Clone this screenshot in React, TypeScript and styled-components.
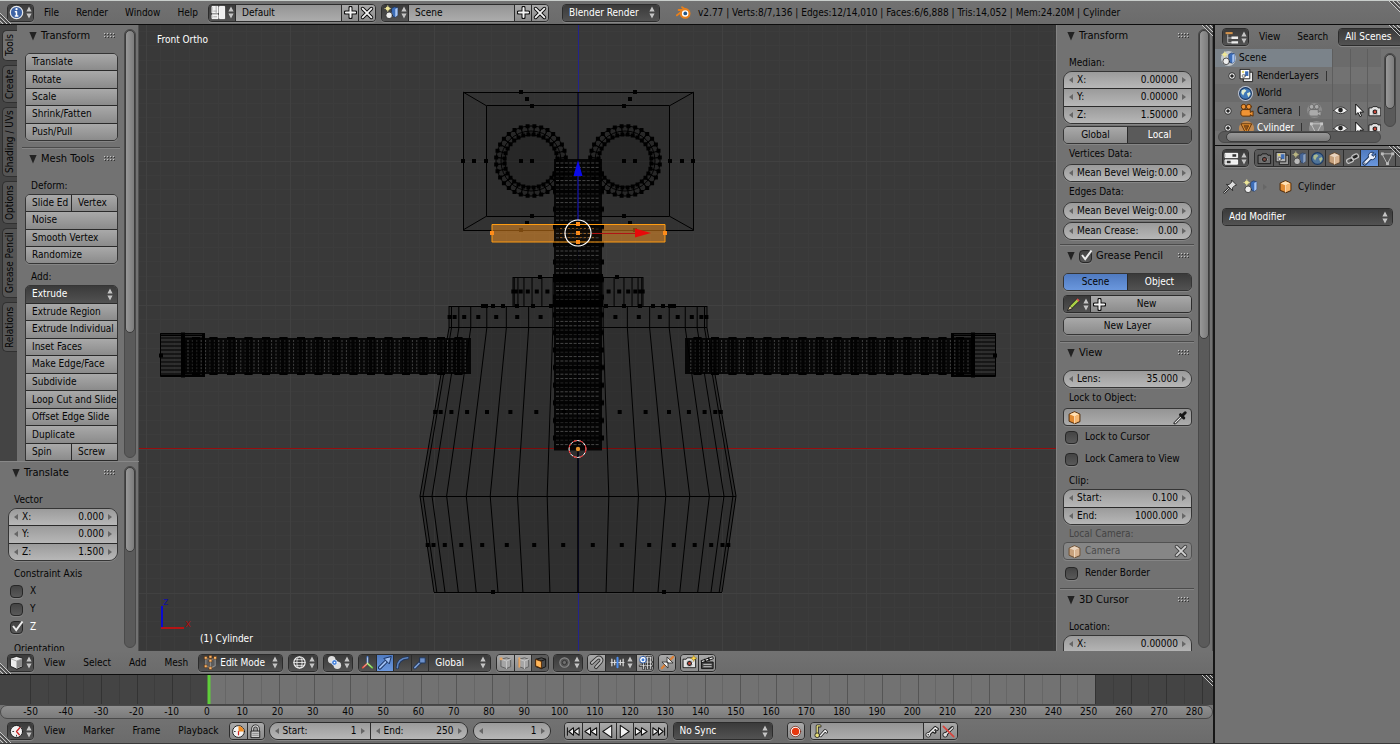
import React from "react";
import styled, { createGlobalStyle, css } from "styled-components";

const Global = createGlobalStyle`
  *, *::before, *::after { box-sizing: border-box; }
  body { margin: 0; background: #727272; }
  body, button, input, select {
    font-family: "DejaVu Sans Condensed", "DejaVu Sans", sans-serif;
    font-size: 10px;
    line-height: 14px;
    color: #050505;
  }
  button, input, select { margin: 0; padding: 0; border: 0; background: none; border-radius: 0; outline: 0; }
  svg { display: block; flex: none; }
`;

/* ---------- surfaces ---------- */
const lightFace = "linear-gradient(#a9a9a9, #8b8b8b)";
const darkFace = "linear-gradient(#3a3a3a, #525252)";
const numFace = "linear-gradient(#9b9b9b, #b7b7b7)";
const textFace = "linear-gradient(#949494, #acacac)";
const blueFace = "linear-gradient(#4f7ac0, #6a97dd)";

const Screen = styled.div`
  height: 100vh;
  min-height: 480px;
  display: flex;
  flex-direction: column;
  border-top: 1px solid #c9cecb;
  border-bottom: 1px solid #3a3a3a;
  overflow: hidden;
`;
const Bar = styled.header<{ $line?: boolean; $h?: number }>`
  position: relative;
  flex: none;
  height: ${(p) => p.$h ?? 24}px;
  display: flex;
  align-items: center;
  padding-left: 7px;
  background: linear-gradient(#727272, #6b6b6b);
  ${(p) => p.$line && css`border-bottom: 1px solid #0c0c0c;`}
`;
const Workspace = styled.div`
  flex: 1;
  min-height: 0;
  display: flex;
`;
const MainColumn = styled.main`
  flex: 1;
  min-width: 0;
  display: flex;
  flex-direction: column;
`;
const SideColumn = styled.aside`
  flex: none;
  width: 187px;
  display: flex;
  flex-direction: column;
  border-left: 2px solid #161616;
  background: #727272;
  overflow: hidden;
`;
const ViewRow = styled.div`
  flex: 1;
  min-height: 0;
  display: flex;
`;
const Menu = styled.nav<{ $gap?: number }>`
  display: flex;
  gap: ${(p) => p.$gap ?? 17}px;
  margin: 0 10px;
`;
const MenuItem = styled.button`
  white-space: nowrap;
`;

/* ---------- controls ---------- */
const Cluster = styled.div<{ $ml?: number }>`
  display: flex;
  flex: none;
  height: 18px;
  margin-left: ${(p) => p.$ml ?? 5}px;
  border: 1px solid #2c2c2c;
  border-radius: 4px;
  overflow: hidden;
  box-shadow: 0 1px 0 #858585;
  > * + * { border-left: 1px solid #2c2c2c; }
`;
type Tone = "light" | "dark" | "blue" | "dim";
const face = { light: lightFace, dark: darkFace, blue: blueFace, dim: "#5a5a5a" };
const IconButton = styled.button<{ $tone?: Tone; $w?: number }>`
  flex: none;
  width: ${(p) => p.$w ?? 17}px;
  display: flex;
  align-items: center;
  justify-content: center;
  gap: 2px;
  background: ${(p) => face[p.$tone ?? "light"]};
`;
const TextInput = styled.input<{ $w: number }>`
  width: ${(p) => p.$w}px;
  padding: 0 6px;
  background: ${textFace};
`;
const SelectBox = styled.label<{ $w?: number }>`
  position: relative;
  display: flex;
  align-items: center;
  width: ${(p) => (p.$w ? p.$w + "px" : "auto")};
  background: ${darkFace};
  padding: 0 4px;
  select {
    appearance: none;
    flex: 1;
    min-width: 0;
    height: 100%;
    padding-left: 2px;
    color: #fff;
  }
`;
const Title = styled.h2`
  margin: 0;
  flex: 1;
  font-size: 11px;
  font-weight: normal;
  line-height: 14px;
  white-space: nowrap;
`;
const PanelHead = styled.div`
  height: 22px;
  display: flex;
  align-items: center;
  gap: 4px;
  padding: 0 5px 0 7px;
`;
const PanelBox = styled.section<{ $pad?: number }>`
  border-bottom: 1px solid #4b4b4b;
  box-shadow: 0 1px 0 #858585;
  padding-bottom: ${(p) => p.$pad ?? 6}px;
`;
const Body = styled.div<{ $top?: number }>`
  padding: ${(p) => p.$top ?? 6}px 2px 0 3px;
`;
const Caption = styled.div<{ $top?: number; $bottom?: number; $off?: boolean }>`
  height: 14px;
  margin: ${(p) => p.$top ?? 3}px 0 ${(p) => p.$bottom ?? 3}px 6px;
  white-space: nowrap;
  color: ${(p) => (p.$off ? "#444" : "#050505")};
`;
const Stack = styled.div<{ $h: number; $round?: boolean; $top?: number }>`
  height: ${(p) => p.$h}px;
  margin-top: ${(p) => p.$top ?? 0}px;
  display: flex;
  flex-direction: column;
  border: 1px solid #353535;
  border-radius: ${(p) => (p.$round ? 9 : 5)}px;
  overflow: hidden;
  box-shadow: 0 1px 0 #858585;
  > * { flex: 1; min-height: 0; }
  > * + * { border-top: 1px solid #2a2a2a; }
`;
const Split = styled.div`
  display: flex;
  > * { flex: 1; min-width: 0; }
  > * + * { border-left: 1px solid #2a2a2a; }
`;
const ToolButton = styled.button<{ $tone?: Tone; $center?: boolean }>`
  display: flex;
  align-items: center;
  justify-content: ${(p) => (p.$center ? "center" : "flex-start")};
  padding-left: ${(p) => (p.$center ? 0 : 6)}px;
  text-align: left;
  white-space: nowrap;
  background: ${(p) => face[p.$tone ?? "light"]};
  color: ${(p) => (p.$tone === "dark" || p.$tone === "dim" ? "#fff" : "#050505")};
`;
const NumLabel = styled.label<{ $w?: number }>`
  display: flex;
  align-items: center;
  width: ${(p) => (p.$w ? p.$w + "px" : "auto")};
  padding: 0 5px;
  background: ${numFace};
  white-space: nowrap;
  > span { margin-left: 4px; }
  input { flex: 1; min-width: 0; width: 0; padding-right: 4px; text-align: right; }
`;
const CheckRow = styled.label<{ $top?: number; $on?: boolean }>`
  display: flex;
  align-items: center;
  gap: 7px;
  height: 18px;
  margin-top: ${(p) => p.$top ?? 0}px;
  padding-left: 2px;
  color: ${(p) => (p.$on ? "#fff" : "#050505")};
`;
const Box = styled.span`
  position: relative;
  flex: none;
  width: 13px;
  height: 13px;
  input {
    display: block;
    appearance: none;
    width: 13px;
    height: 13px;
    border: 1px solid #272727;
    border-radius: 4px;
    background: linear-gradient(#444, #595959);
    box-shadow: 0 1px 0 #858585;
  }
  svg { position: absolute; left: 1px; top: -1px; pointer-events: none; }
`;
const ObjectField = styled.label<{ $off?: boolean }>`
  display: flex;
  align-items: center;
  gap: 3px;
  height: 18px;
  padding: 0 3px;
  border: 1px solid ${(p) => (p.$off ? "#525252" : "#353535")};
  border-radius: 4px;
  background: ${(p) => (p.$off ? "#868686" : textFace)};
  box-shadow: 0 1px 0 #858585;
  input { flex: 1; min-width: 0; color: ${(p) => (p.$off ? "#4a4a4a" : "#050505")}; }
`;
const Pill = styled(Cluster)`
  border-radius: 9px;
`;
const PencilRow = styled(Cluster)`
  margin: 4px 0 0;
`;
const NewButton = styled.button`
  flex: 1;
  display: flex;
  align-items: center;
  padding-left: 2px;
  background: ${lightFace};
  > span { flex: 1; padding-right: 4px; text-align: center; }
`;
const KeyField = styled.label`
  display: flex;
  align-items: center;
  width: 112px;
  padding-left: 2px;
  background: ${textFace};
  input { flex: 1; min-width: 0; }
`;
const Stats = styled.div`
  display: flex;
  align-items: center;
  gap: 7px;
  margin-left: 16px;
  white-space: nowrap;
`;

/* ---------- scroll bars ---------- */
const Track = styled.div<{ $bottom?: number }>`
  flex: none;
  width: 12px;
  margin: 4px 0 ${(p) => p.$bottom ?? 3}px;
  border: 1px solid #4a4a4a;
  border-radius: 6px;
  background: #5a5a5a;
`;
const Thumb = styled.div<{ $part: number }>`
  height: ${(p) => p.$part}%;
  border: 1px solid #3c3c3c;
  border-radius: 6px;
  background: linear-gradient(90deg, #989898, #7c7c7c);
`;
const HTrack = styled.div`
  height: 12px;
  margin: 0 19px 0 3px;
  padding-left: 7px;
  border: 1px solid #4a4a4a;
  border-radius: 6px;
  background: #5a5a5a;
`;
const HThumb = styled.div`
  width: 68%;
  height: 10px;
  border: 1px solid #3c3c3c;
  border-radius: 5px;
  background: linear-gradient(#989898, #7c7c7c);
`;

/* ---------- tool shelf ---------- */
const Shelf = styled.div`
  flex: none;
  width: 139px;
  display: flex;
  flex-direction: column;
  background: #727272;
`;
const ShelfTop = styled.div`
  flex: 1;
  min-height: 0;
  display: flex;
  overflow: hidden;
  border-bottom: 1px solid #888;
`;
const ShelfBottom = styled.div`
  flex: none;
  height: 189px;
  display: flex;
  overflow: hidden;
`;
const Tabs = styled.div`
  flex: none;
  width: 17px;
  display: flex;
  flex-direction: column;
  gap: 4px;
  padding: 5px 0 0 2px;
  background: #444;
`;
const Tab = styled.button<{ $on?: boolean; $h: number }>`
  flex: none;
  height: ${(p) => p.$h}px;
  writing-mode: vertical-rl;
  transform: rotate(180deg);
  text-align: center;
  white-space: nowrap;
  border: 1px solid #303030;
  border-left: 0;
  border-radius: 0 5px 5px 0;
  background: ${(p) => (p.$on ? "#727272" : "#555")};
`;
const ShelfBody = styled.div`
  flex: 1;
  min-width: 0;
  overflow: hidden;
  margin: 0 4px 0 5px;
`;
const ShelfEdge = styled.div`
  flex: none;
  width: 3px;
  border-right: 1px solid #505050;
`;
const Props = styled.div`
  position: relative;
  flex: none;
  width: 157px;
  display: flex;
  overflow: hidden;
  background: #727272;
  border-left: 1px solid #848484;
`;
const PropsBody = styled.div`
  flex: 1;
  min-width: 0;
  overflow: hidden;
  margin: 0 4px 0 3px;
`;
const View3D = styled.div`
  flex: 1;
  min-width: 0;
  background: #393939;
  svg { width: 100%; height: 100%; }
`;

/* ---------- timeline ---------- */
const TimeTrack = styled.div`
  position: relative;
  flex: none;
  height: 31px;
  border-top: 1px solid #0c0c0c;
  border-bottom: 1px solid #444;
  svg.ticks { width: 100%; height: 100%; }
`;
const TimeScale = styled.div`
  flex: none;
  height: 14px;
  padding-left: 12px;
  display: grid;
  grid-template-columns: repeat(34, minmax(0, 1fr));
  text-align: center;
  border: 1px solid #4a4a4a;
  border-radius: 7px;
  background: linear-gradient(#909090, #7a7a7a);
  line-height: 12px;
`;
const CornerSpot = styled.div<{ $right?: boolean; $bottom?: boolean }>`
  position: absolute;
  ${(p) => (p.$right ? "right: 0;" : "left: 0;")}
  ${(p) => (p.$bottom ? "bottom: 0;" : "top: 0;")}
`;

/* ---------- outliner / properties ---------- */
const Outliner = styled.div`
  flex: none;
  height: 97px;
  display: flex;
  flex-direction: column;
  border-bottom: 1px solid #0c0c0c;
`;
const OutTop = styled.div`
  height: 82px;
  display: flex;
  padding-right: 4px;
  overflow: hidden;
`;
const Tree = styled.ul`
  flex: 1;
  min-width: 0;
  margin: 0 3px 0 0;
  padding: 0;
  list-style: none;
  overflow: hidden;
`;
const Node = styled.li<{ $depth: number; $picked?: boolean; $on?: boolean }>`
  display: grid;
  grid-template-columns: 117px 18px 17px 1fr;
  height: 17px;
  color: ${(p) => (p.$on ? "#fff" : "#050505")};
  &:nth-child(odd) { height: 18px; background: #6b6b6b; }
  > div { display: flex; align-items: center; border-left: 1px solid #5e5e5e; }
  > div:first-child {
    border-left: 0;
    gap: 3px;
    padding-left: ${(p) => p.$depth}px;
    ${(p) => p.$picked && "background: #7b838a;"}
  }
`;
const Mark = styled.i`
  width: 1px;
  height: 10px;
  margin: 0 4px;
  background: #333;
`;
const Gap = styled.i`
  width: 1px;
`;
const Halo = styled.span`
  display: flex;
  border-radius: 8px;
  background: #8c8c8c;
`;
const Context = styled.div`
  height: 33px;
  display: flex;
  align-items: center;
  gap: 5px;
  padding-left: 8px;
`;
const ModifierRow = styled.div`
  display: flex;
  margin: 5px 7px 0;
  height: 18px;
  border: 1px solid #2c2c2c;
  border-radius: 4px;
  overflow: hidden;
  > label { flex: 1; }
`;

/* ---------- icons ---------- */
type Kids = { children?: React.ReactNode; s?: number };
const I = ({ children, s = 15 }: Kids) => (
  <svg width={s} height={s} viewBox="0 0 16 16" fill="none" strokeLinecap="round" strokeLinejoin="round" aria-hidden="true">
    {children}
  </svg>
);
const UpDown = () => (
  <svg width="6" height="13" viewBox="0 0 6 13" aria-hidden="true">
    <path d="M3 0.5 5.6 5.4H.4zM3 12.5 5.6 7.6H.4z" fill="#c4c4c4" />
  </svg>
);
const ArrowL = () => <svg width="4" height="6" viewBox="0 0 4 6" aria-hidden="true"><path d="M4 0v6L0 3z" fill="#666" /></svg>;
const ArrowR = () => <svg width="4" height="6" viewBox="0 0 4 6" aria-hidden="true"><path d="M0 0v6l4-3z" fill="#666" /></svg>;
const Tri = () => <svg width="8" height="9" viewBox="0 0 8 9" aria-hidden="true"><path d="M.4 0h7.2L4 8.5z" fill="#222" /></svg>;
const Grip = () => (
  <svg width="11" height="6" viewBox="0 0 11 6" aria-hidden="true">
    {[0, 3, 6, 9].map((x) => [0, 3].map((y) => (
      <g key={x + "-" + y}><path d={`M${x} ${y}h1v1h-1z`} fill="#c6c6c6" /><path d={`M${x + 1} ${y + 1}h1v1h-1z`} fill="#333" /></g>
    )))}
  </svg>
);
const Corner = ({ flip }: { flip?: boolean }) => (
  <svg width="11" height="11" viewBox="0 0 11 11" aria-hidden="true">
    <g transform={flip ? "" : "translate(11 11) rotate(180)"}>
      <path d="M0 0 11 11M4 0 11 7M8 0 11 3" stroke="#c8c8c8" />
      <path d="M1.5 0 11 9.5M5.5 0 11 5.5" stroke="#2a2a2a" />
    </g>
  </svg>
);
const Info = () => (
  <I><circle cx="8" cy="8" r="6.6" fill="#3d63a5" stroke="#e8e8e8" strokeWidth="1.3" /><path d="M8 7.3v4M6.8 11.6h2.6M6.8 7.3H8" stroke="#fff" strokeWidth="1.6" /><circle cx="8" cy="4.5" r="1.2" fill="#fff" /></I>
);
const LayoutIcon = () => (
  <I><path d="M1.5 1.5h6v7h-6zM1.5 10.5h6v4h-6zM9.500 1.5h5v13h-5z" fill="#eee" stroke="#fff" /><path d="M5.500 1.500v7M3 6.500h3M3 12.500h3" stroke="#aaa" /></I>
);
const SceneArt = () => (
  <><path d="M8.500 3.500 11 2l3.500 1v8L12 13l-3.500-1z" fill="#3c6db8" stroke="#1d3563" strokeWidth=".7" /><path d="M12 4.300 14.500 3v8L12 13z" fill="#a9c6f2" /><circle cx="4" cy="3.800" r="2.200" fill="#e8e08a" /><path d="M4 .6v6.400M.8 3.800h6.400" stroke="#efe9a6" strokeWidth=".7" /><circle cx="5.500" cy="11" r="3.500" fill="#eee" stroke="#222" strokeWidth=".8" /></>
);
const SceneIcon = ({ dim, lit }: { dim?: boolean; lit?: boolean }) => (
  <I>{lit && <circle cx="8" cy="8" r="8" fill="#c3c8cc" />}<g opacity={dim ? 0.65 : 1}><SceneArt /></g></I>
);
const Plus = () => <I s={13}><path d="M8 2v12M2 8h12" stroke="#111" strokeWidth="5" /><path d="M8 2.400v11.200M2.400 8h11.200" stroke="#f2f2f2" strokeWidth="2.500" /></I>;
const Cross = ({ off }: { off?: boolean }) => <I s={14}><path d="m3 3 10 10M13 3 3 13" stroke={off ? "#444" : "#111"} strokeWidth="4.200" /><path d="m3 3 10 10M13 3 3 13" stroke={off ? "#d2d2d2" : "#f2f2f2"} strokeWidth="2.100" /></I>;
const Logo = () => (
  <I><path d="M1 11 8.500 5.300H2.800M6.500 2.300l5 3.700" stroke="#e8801c" strokeWidth="2" /><circle cx="9.800" cy="9" r="4.600" fill="#fff" stroke="#e8801c" strokeWidth="2.200" /><circle cx="9.900" cy="9" r="2" fill="#265787" /></I>
);
const CubeW = () => (
  <I><path d="M8 15 1.500 12V3.500L8 1.500l6.500 2V12z" fill="#ececec" stroke="#111" strokeWidth=".9" /><path d="M8 6.500V14.500L14 11.600V4.200z" fill="#8a8a8a" /><path d="M2.400 4.200 8 6.400l5.600-2.200" stroke="#999" strokeWidth=".8" /></I>
);
const CubeO = ({ dim }: { dim?: boolean }) => (
  <I><path d="M8 14.500 2.200 12V4.400L8 1.800l5.800 2.600V12z" fill={dim ? "#c7a17c" : "#e08a32"} stroke={dim ? "#6a4c30" : "#4b2807"} strokeWidth="1" /><path d="M2.800 4.600 8 2.400l5.200 2.200L8 7z" fill={dim ? "#e8d3be" : "#ffe0b4"} /><path d="M8 7v7l5-2.400V4.800z" fill={dim ? "#d8b492" : "#f6b872"} /><path d="M8 7v7" stroke="#fff2dd" strokeWidth=".7" /></I>
);
const EditIcon = () => (
  <I><path d="M3 3.500 8 5l5-1.500v8L8 14l-5-2.500zM8 5v9" stroke="#8d8d8d" strokeWidth="1.200" fill="#5c5c5c" />{[[3, 3], [8, 2], [13, 3], [3, 12], [8, 14], [8, 6]].map(([x, y]) => <rect key={x + "," + y} x={x - 1.4} y={y - 1.4} width="2.800" height="2.800" fill="#ffb566" stroke="#5b2f08" strokeWidth=".5" />)}</I>
);
const Globe = () => <I><circle cx="8" cy="8" r="6" stroke="#e8e8e8" strokeWidth="1.300" /><ellipse cx="8" cy="8" rx="2.800" ry="6" stroke="#e8e8e8" /><path d="M2 8h12M3 5h10M3 11h10" stroke="#e8e8e8" strokeWidth=".9" /></I>;
const Pivot = () => <I><circle cx="5" cy="5" r="4" fill="#ddd" /><circle cx="11" cy="11" r="4" fill="#ddd" /><circle cx="8" cy="8" r="3" fill="#3d7bd8" stroke="#fff" strokeWidth=".8" /><circle cx="8" cy="8" r=".9" fill="#fff" /></I>;
const Axes = () => <I><path d="M8 9V2" stroke="#4d84e0" strokeWidth="2" /><path d="m8 9-5 4.500" stroke="#e84a3a" strokeWidth="2" /><path d="m8 9 5 4.500" stroke="#6fce3f" strokeWidth="2" /><path d="M8 3v6l4 3.500M8 9l-4 3.500" stroke="#e8e8e8" strokeWidth=".7" /></I>;
const MoveIcon = () => <I><path d="m2 13.500 6-6" stroke="#16305f" strokeWidth="4" /><path d="m2 13.500 6-6" stroke="#9dbdf0" strokeWidth="2" /><path d="M14 2 12 9.500 6.500 4z" fill="#9dbdf0" stroke="#16305f" /></I>;
const RotIcon = () => <I><path d="M2.500 13.500C2.500 7 7 3.500 13.500 3" stroke="#20365c" strokeWidth="3.400" /><path d="M2.500 13.500C2.500 7 7 3.500 13.500 3" stroke="#5f85c0" strokeWidth="1.700" /></I>;
const ScaleIcon = () => <I><path d="m2 13.500 6-6" stroke="#20365c" strokeWidth="3.600" /><path d="m2 13.500 6-6" stroke="#7d9fd4" strokeWidth="1.700" /><path d="M7.500 3H13v5.500H7.500z" fill="#6c90cb" stroke="#20365c" /></I>;
const ModeCube = ({ kind }: { kind: "v" | "e" | "f" }) => (
  <I>
    <path d="M3.500 4.500 9 3l4.500 1.500v8L9 14.500l-5.500-2z" fill={kind === "f" ? "#4b4b4b" : "#a5a5a5"} stroke={kind === "f" ? "#111" : "#5e5e5e"} />
    <path d="M9 6.500v8M3.500 4.500 9 6.500l4.500-2" stroke={kind === "f" ? "#111" : "#c9c9c9"} />
    {kind === "v" && <circle cx="3.300" cy="4" r="1.700" fill="#e5a565" />}
    {kind === "e" && <path d="M3.500 3.500v9" stroke="#e5a565" strokeWidth="2" />}
    {kind === "f" && <path d="M3.200 4.800 9 6.800v7.400l-5.800-2.400z" fill="#ffb65a" stroke="#5b2f08" />}
  </I>
);
const PropEdit = () => <I><circle cx="8" cy="8" r="5" fill="#555" stroke="#8a8a8a" strokeWidth="1.200" /><circle cx="8" cy="8" r="2.300" fill="#6e6e6e" stroke="#333" /></I>;
const Magnet = () => <I><path d="m3 8.500 5.500-5c3-2.200 6.300 1.200 4 4L7.500 13" stroke="#333" strokeWidth="4" /><path d="m3 8.500 5.500-5c3-2.200 6.300 1.200 4 4L7.500 13" stroke="#b9b9b9" strokeWidth="2" /></I>;
const SnapInc = () => <I><path d="M1 8h14" stroke="#ddd" /><path d="M2 4.500v7M5 5.500v5M11 5.500v5M14 4.500v7" stroke="#ddd" strokeWidth="1.300" /><path d="M8 3v10" stroke="#4d8ff0" strokeWidth="2.200" /></I>;
const SnapGrid = () => <I><path d="M5 3h9M3 7.500h12M2 11.500h13M6 2v13M10 2v13M13.500 2v13" stroke="#111" strokeWidth="2.400" /><path d="M5 3h9M3 7.500h12M2 11.500h13M6 2v13M10 2v13M13.500 2v13" stroke="#e6e6e6" /><circle cx="5.300" cy="5" r="3.600" fill="#fff" stroke="#2b5aa8" /><circle cx="5.300" cy="5" r="1.600" fill="#3d7bd8" /></I>;
const Merge = () => <I><path d="M2 14l4.500-4.500M14 2 9.500 6.500" stroke="#d9813a" strokeWidth="2.400" /><path d="M2.500 7.500h6v6zM13.500 8.500h-6v-6z" fill="#eee" stroke="#222" strokeWidth=".8" /></I>;
const Camera = ({ star, dim, s }: { star?: boolean; dim?: boolean; s?: number }) => (
  <I s={s}><path d="M1.500 4.500h3l1-1.500h5l1 1.500h3v9h-13z" fill={dim ? "#6d6d6d" : "#e2e2e2"} stroke="#111" strokeWidth=".9" /><circle cx="8" cy="9" r="3.300" fill="#222" stroke={dim ? "#999" : "#fff"} strokeWidth=".8" /><circle cx="8" cy="9" r="1.500" fill={dim ? "#854c43" : "#c9483a"} />{star && <path d="m12.500 0 1 2.500 2.500 1-2.500 1-1 2.500-1-2.500-2.500-1 2.500-1z" fill="#ffd94a" stroke="#7b5a00" strokeWidth=".4" />}</I>
);
const Clap = () => <I><path d="M2 7.500h12v7H2z" fill="#444" stroke="#111" /><path d="m1.500 6 12-4.200.7 2.200L2.300 8z" fill="#eee" stroke="#111" /><path d="m5 4.800 1 2M9 3.400l1 2" stroke="#111" strokeWidth="1.500" /><path d="M4 10h8M4 12.500h8" stroke="#ccc" /></I>;
const Clock = () => <I><circle cx="8" cy="8" r="6.500" fill="#f2f2f2" stroke="#1a1a1a" /><path d="M8 8 11.500 4M8 8l3 3.500" stroke="#c22" strokeWidth="1.400" /><path d="M4 8h1M8 13v-1" stroke="#333" /></I>;
const ClockPie = () => <I><circle cx="8" cy="8" r="6.300" fill="#f4f4f4" stroke="#1a1a1a" /><path d="M8 8V2.200A5.800 5.800 0 0 1 13.800 8z" fill="#f08a1d" /><path d="M8 8v3.500" stroke="#c22" strokeWidth="1.300" /><path d="M3.500 8h1" stroke="#333" /></I>;
const Lock = () => <I><path d="M5 8V5a3 3 0 0 1 6 0v3" stroke="#222" strokeWidth="3" /><path d="M5 8V5a3 3 0 0 1 6 0v3" stroke="#ddd" strokeWidth="1.200" /><path d="M3.500 7.500h9v7h-9z" fill="#cfcfcf" stroke="#222" /><path d="M5 10h6M5 12h6" stroke="#888" /></I>;
const Play = ({ d }: { d: string }) => <I><path d={d} fill="#f2f2f2" stroke="#111" strokeWidth="1.100" /></I>;
const Rec = () => <I><circle cx="8" cy="8" r="4.600" fill="#e6380f" stroke="#fff" strokeWidth="1.200" /><circle cx="8" cy="8" r="5.500" stroke="#7a1a08" strokeWidth=".7" /></I>;
const Key = () => <I><path d="M5 11 12 4m0 0 2 1.500M9.500 6.500l2 2" stroke="#222" strokeWidth="3.600" /><circle cx="4.500" cy="11.500" r="2.500" fill="#f0f0f0" stroke="#222" strokeWidth=".9" /><path d="M5.500 10.500 12 4l1.800 1.500M9.500 6.500l1.600 1.600" stroke="#f0f0f0" strokeWidth="1.600" /><circle cx="4.500" cy="11.500" r=".8" fill="#222" /></I>;
const KeySet = () => <I><path d="M4.500 10V2h3" stroke="#222" strokeWidth="3.200" /><path d="M4.500 10V2h3" stroke="#e8df7a" strokeWidth="1.500" /><circle cx="4.500" cy="12" r="2.500" fill="#e8df7a" stroke="#222" strokeWidth=".9" /><path d="m8 12.500 5-5.500 1.500 1.500" stroke="#222" strokeWidth="3.200" /><path d="m8 12.500 5-5.500 1.500 1.500" stroke="#f0f0f0" strokeWidth="1.500" /></I>;
const KeyOff = () => <I><path d="M5 11 12 4" stroke="#222" strokeWidth="3.600" /><circle cx="4.500" cy="11.500" r="2.500" fill="#ddd" stroke="#222" /><path d="M5.500 10.500 12.500 4" stroke="#ddd" strokeWidth="1.600" /><path d="m2.500 2.500 11 11" stroke="#d8433c" strokeWidth="1.900" /></I>;
const TreeIcon = () => <I><path d="M4 4v9.500h5M4 8.500h5" stroke="#bbb" /><path d="M1.500 2h8v2.500h-8z" fill="#e8a050" stroke="#333" strokeWidth=".5" /><path d="M8 7h7v2.500H8zM8 12h7v2.500H8z" fill="#eee" /></I>;
const PropsIcon = () => <I><path d="M1.500 2.500h13v4.500h-13zM1.500 9.500h13v4.500h-13z" fill="#eee" stroke="#fff" /><path d="M9 3.500h4v2.500H9zM3 10.500h4v2.500H3z" fill="#333" /></I>;
const Layers = ({ dim }: { dim?: boolean }) => <I><path d="M5 4.500h9.500v10H5z" fill={dim ? "#999" : "#eee"} stroke="#222" /><path d="M1.500 1.500h10v10h-10z" fill={dim ? "#b5b5b5" : "#fff"} stroke="#222" /><path d="M6.500 3.500h3.500v5H6.500z" fill="#3c6db8" /><circle cx="5" cy="8.500" r="1.700" fill="#ddd" stroke="#333" strokeWidth=".6" /><circle cx="4.300" cy="4.200" r="1.200" fill="#e2d667" /></I>;
const World = ({ dim }: { dim?: boolean }) => <I>{!dim && <circle cx="8" cy="8" r="8" fill="#bcc4d4" />}<circle cx="8" cy="8" r="6.300" fill={dim ? "#4e7399" : "#3f79b8"} stroke="#1d3a63" strokeWidth="1.200" /><path d="M4 4.500 7 3.500l2 1.500-2 2-1.500 3-2-2.500zM9.500 8l3-1.500 1 2-2.500 3.500z" fill={dim ? "#aab98e" : "#e3efd0"} /></I>;
const Link = () => <I><path d="m7 10 5-5" stroke="#222" strokeWidth="3" /><rect x="1.500" y="8" width="7.500" height="4.600" rx="2.300" transform="rotate(-25 5 10)" stroke="#c4c4c4" strokeWidth="1.300" /><rect x="7" y="3.600" width="7.500" height="4.600" rx="2.300" transform="rotate(-25 11 6)" stroke="#c4c4c4" strokeWidth="1.300" /></I>;
const Wrench = () => <I><path d="M2.800 13.200 9 7" stroke="#173058" strokeWidth="4.600" /><path d="M14.300 3.500 11.800 5.700 10.300 4.200 12.500 1.700A4 4 0 1 0 14.300 3.500z" fill="#e8eefa" stroke="#173058" /><path d="M2.800 13.200 9 7" stroke="#e8eefa" strokeWidth="2.500" /><circle cx="3" cy="13" r=".7" fill="#173058" /></I>;
const MeshTri = ({ tone = "#bdbdbd" }: { tone?: string }) => <I><path d="M2.500 3h11L8 13.500z" stroke={tone} strokeWidth="1" />{[[2.5, 3], [13.5, 3], [8, 13.5]].map(([x, y]) => <rect key={x} x={x - 1.5} y={y - 1.5} width="3" height="3" fill={tone} />)}</I>;
const MeshObj = () => <I><circle cx="8" cy="8" r="8" fill="#c08a52" /><path d="M2.500 3h11L8 14z" fill="#f39a35" stroke="#5a2e05" strokeWidth="1" /><path d="M5.600 5h4.800L8 9.800z" fill="#8c5420" stroke="#5a2e05" strokeWidth=".8" /></I>;
const CamObj = ({ tone = "#ef9334", line = "#5a2e05" }: { tone?: string; line?: string }) => <I><circle cx="5" cy="4" r="2.600" fill={tone} stroke={line} /><circle cx="10.500" cy="4" r="2.600" fill={tone} stroke={line} /><path d="M4 7h8v3l3-1.500v5.500L12 12.500v1.500H4l-2-1.500v-3z" fill={tone} stroke={line} /></I>;
const Expand = () => <svg width="8" height="8" viewBox="0 0 8 8" aria-hidden="true"><circle cx="4" cy="4" r="3.300" fill="#eee" stroke="#222" strokeWidth=".9" /><path d="M2.300 4h3.400M4 2.300v3.400" stroke="#111" strokeWidth="1.300" /></svg>;
const Eye = () => <I><path d="M1 8c3.500-5 10.500-5 14 0-3.500 4.500-10.500 4.500-14 0z" fill="#f0f0f0" stroke="#222" strokeWidth=".9" /><circle cx="8" cy="7.500" r="2.500" fill="#222" /></I>;
const Cursor = () => <I><path d="M5 1.500v11l2.600-2.300L9.500 14.500l1.800-.8-1.800-4h3.500z" fill="#fff" stroke="#111" /></I>;
const Pin = () => <I><path d="m9.500 1.500 5 5-2 .5-2.500 2.500.3 3-6.800-6.800 3 .3L9 3.500z" fill="#ddd" stroke="#222" strokeWidth=".9" /><path d="m6 10-4.500 4.500" stroke="#222" strokeWidth="2.200" /><path d="m6 10-4.500 4.500" stroke="#ddd" strokeWidth="1" /></I>;
const Pencil = () => <I><path d="M2 14 4 9.500 11.500 2l2.500 2.500L6.500 12z" fill="#a8cf45" stroke="#222" /><path d="m11 2.500 2.500 2.500 1-1.500-2-2z" fill="#e05050" /><path d="M2 14l2-4.500L6.500 12z" fill="#f2dca8" stroke="#222" strokeWidth=".6" /></I>;
const Dropper = () => <I><path d="M2 14 9 7" stroke="#222" strokeWidth="3" /><path d="M2.300 13.700 9 7" stroke="#eee" strokeWidth="1.300" /><path d="m8 5 3.500 3.500M9.800 6.200 13 3" stroke="#151515" strokeWidth="3.200" /></I>;
const CheckMark = () => <svg width="13" height="12" viewBox="0 0 13 12" aria-hidden="true"><path d="m2 6 3.200 4L11.500 1.500" fill="none" stroke="#eee" strokeWidth="2" /></svg>;

/* ---------- composite controls ---------- */
const EditorType = ({ icon, name }: { icon: React.ReactNode; name: string }) => (
  <Cluster $ml={0}><IconButton $tone="dark" $w={25} aria-label={name}>{icon}<UpDown /></IconButton></Cluster>
);
const Choice = ({ value, w, icon, name }: { value: string; w?: number; icon?: React.ReactNode; name: string }) => (
  <SelectBox $w={w}>{icon}<select aria-label={name}><option>{value}</option></select><UpDown /></SelectBox>
);
const Num = ({ label, value, w }: { label?: string; value: string; w?: number }) => (
  <NumLabel $w={w}><ArrowL /><span>{label}</span><input defaultValue={value} aria-label={label ?? "Current frame"} /><ArrowR /></NumLabel>
);
const Check = ({ on, name }: { on?: boolean; name?: string }) => (
  <Box><input type="checkbox" defaultChecked={on} aria-label={name} />{on && <CheckMark />}</Box>
);
const Panel = ({ title, check, pad, children }: { title: string; check?: boolean; pad?: number; children: React.ReactNode }) => (
  <PanelBox $pad={pad}>
    <PanelHead><Tri />{check && <Check on name={title} />}<Title>{title}</Title><Grip /></PanelHead>
    {children}
  </PanelBox>
);
const Tools = ({ items }: { items: string[] }) => <>{items.map((t) => <ToolButton key={t}>{t}</ToolButton>)}</>;

/* ---------- 3D view drawing ---------- */
const CX = 578;
const ring = Array.from({ length: 17 }, (_, k) => Math.sin(((k - 8) * Math.PI) / 16));
const ringMid = Array.from({ length: 16 }, (_, k) => Math.sin(((k - 7.5) * Math.PI) / 16));
const range = (n: number) => Array.from({ length: n }, (_, i) => i);
const dots = (pts: number[][], size = 4) => pts.map(([x, y]) => `M${(x - size / 2).toFixed(1)} ${(y - size / 2).toFixed(1)}h${size}v${size}h-${size}z`).join("");
const bandLines = (y1: number, w1: number, y2: number, w2: number) => ring.map((r) => `M${CX + r * w1} ${y1}L${CX + r * w2} ${y2}`).join("");
const bandDots = (y: number, w: number) => dots(ringMid.map((r) => [CX + r * w, y]));

const EyeRing = ({ x }: { x: number }) => {
  const y = 161;
  const at = (r: number, a: number) => [x + r * Math.cos(a), y + r * Math.sin(a)];
  const angles = range(32).map((i) => ((i + 0.5) * Math.PI) / 16);
  return (
    <g>
      <circle cx={x} cy={y} r="36" fill="#000" fillOpacity=".14" />
      {[26, 30, 35].map((r) => <circle key={r} cx={x} cy={y} r={r} fill="none" stroke="#000" strokeWidth="1" />)}
      <path d={angles.map((a) => `M${at(26, a).join(" ")}L${at(36, a).join(" ")}`).join("")} stroke="#000" strokeWidth="1.200" />
      <path d={dots([...angles.map((a) => at(35, a)), ...angles.map((a) => at(26.5, a))], 4)} fill="#000" />
    </g>
  );
};

const Arm = () => (
  <g>
    <path d="M160.500 333.500h44v43h-44z" fill="#000" fillOpacity=".2" stroke="#000" />
    <path d={range(11).map((i) => `M160 ${334 + i * 4}h45`).join("") + "M160 335.500h45M160 375.500h45"} stroke="#000" strokeWidth="1" />
    <path d="M181 332.500h4v45h-4zM159 353.500h4v4h-4z" fill="#000" />
    <path d="M184 338h287v36H184z" fill="#000" fillOpacity=".88" />
    <path d="M202 333h3v44h-3z" fill="#000" />
    <path d={range(64).map((i) => `M${188 + i * 4.4} 340v32`).join("")} stroke="#434343" strokeWidth="1" strokeDasharray="2 1.400" />
    <path d={range(16).map((i) => `M${192 + i * 17.5} 337h8v38h-8z`).join("")} fill="#000" fillOpacity=".45" />
    <path d={range(16).map((i) => `M${192 + i * 17.5} 337h8v2h-8zM${192 + i * 17.5} 373h8v2h-8z`).join("")} fill="#000" />
  </g>
);

const Wireframe = () => (
  <svg viewBox="139 25 917 626" preserveAspectRatio="xMidYMid slice" fill="none" role="img" aria-label="3D view">
    <g shapeRendering="crispEdges">
      <path d={range(66).map((i) => `M${CX + (i - 32) * 14.4} 0v744`).join("") + range(46).map((i) => `M100 ${449 + (i - 31) * 14.4}h1000`).join("")} stroke="#3c3c3c" />
      <path d={range(7).map((i) => `M${CX + (i - 3) * 144} 0v744`).join("") + range(4).map((i) => `M100 ${161 + i * 144}h1000`).join("")} stroke="#414141" />
      <path d="M100 448.500h1000" stroke="#960d0d" />
      <path d="M578 0v744" stroke="#23238c" />
    </g>
    {/* torso */}
    <path d={`M449 306H707V328L736 496 722 592H434L420 496 449 328zM513 277H643V306H513z`} fill="#000" fillOpacity=".17" />
    <path d={bandLines(306, 129, 328, 129) + bandLines(328, 129, 496, 158) + bandLines(496, 158, 592, 144) + bandLines(277, 65, 306, 65)} stroke="#000" />
    <path d="M449 306.500H707M449 327.500H707M420 496.500H736M434 592.500H722M513 277.500H643" stroke="#000" />
    <path d={bandDots(317, 129) + bandDots(412, 143.5) + bandDots(545, 151) + bandDots(291.5, 65)} fill="#000" />
    <path d={dots([[483, 306], [486, 306], [493, 306], [503, 306], [517, 306], [533, 306], [551, 306], [606, 306], [624, 306], [640, 306], [653, 306], [663, 306], [670, 306], [674, 306], [540, 277], [617, 277], [493, 592], [664, 592]])} fill="#000" />
    {/* head */}
    <path d="M463.500 92.500h230v138h-230z" fill="#000" fillOpacity=".12" stroke="#000" />
    <path d="M486.500 105.500h183v111h-183z" fill="#000" fillOpacity=".08" stroke="#000" />
    <path d="m463 92 23 13.500M694 92l-24 13.500M463 230l23-13.500M694 230l-24-13.500M578 92v70" stroke="#000" />
    <path d={dots([521, 635].flatMap((x) => [[x, 92], [x, 230]]).concat([527, 630].flatMap((x) => [[x, 99], [x, 223]]), [532, 624].flatMap((x) => [[x, 106], [x, 216]]), [463, 474, 486, 521, 532, 624, 635, 670, 682, 693].map((x) => [x, 161])))} fill="#000" />
    <EyeRing x={531} />
    <EyeRing x={625} />
    {/* arms */}
    <Arm />
    <g transform="translate(1156 0) scale(-1 1)"><Arm /></g>
    {/* selected slab */}
    <path d="M492 224.500h173v17.500H492z" fill="#ff9620" fillOpacity=".48" />
    {/* spine */}
    <path d="M554 159h48v291.500h-48z" fill="#000" fillOpacity=".88" />
    <path d={range(65).map((i) => `M556 ${163 + i * 4.4}h44`).join("")} stroke="#474747" strokeWidth="1" strokeDasharray="3 1.400" />
    <path d={range(16).map((i) => `M553 ${171 + i * 17.6}h51v6h-51z`).join("")} fill="#000" fillOpacity=".5" />
    <path d={range(16).map((i) => `M553 ${172 + i * 17.6}h3v4h-3zM601 ${172 + i * 17.6}h3v4h-3z`).join("") + "M553 274h50v8h-50zM553 300h50v6h-50z"} fill="#000" />
    <path d="M492 224.500h173v17.500H492z" stroke="#ff9c12" />
    <path d={dots([[492, 233], [665, 233], [578, 224], [578, 242], [578, 233]])} fill="#ff8c1a" />
    <path d="M560 233.500h36M560 228.500h36M560 237.500h36" stroke="#c9781c" strokeOpacity=".6" strokeDasharray="2 2" />
    {/* transform widget */}
    <path d="M578 220v-50" stroke="#1a1ad0" />
    <path d="M578 160l4.500 16h-9z" fill="#0b0bea" />
    <path d="M592 233.500h44" stroke="#b01414" />
    <path d="M651 233l-16-4.500v9z" fill="#e80a0a" />
    <circle cx="578" cy="233" r="13" stroke="#fff" strokeWidth="1.200" />
    {/* 3D cursor */}
    <path d="M578 451V592" stroke="#000" />
    <circle cx="577.500" cy="449" r="8.500" stroke="#fff" />
    <circle cx="577.500" cy="449" r="8.500" stroke="#e01010" strokeDasharray="4 3" />
    <circle cx="578" cy="449" r="2.200" fill="#e8952e" />
    {/* mini axes */}
    <path d="M162 628v-22" stroke="#0b0bd0" strokeWidth="2" />
    <path d="M161 628h23" stroke="#e00808" strokeWidth="1.500" />
    <g fontSize="10" fontFamily='"DejaVu Sans", sans-serif'>
      <text x="163" y="605" fill="#1010a0">z</text>
      <text x="185" y="627" fill="#a01010">x</text>
    </g>
    <g fontSize="10" fill="#fff">
      <text x="157" y="43">Front Ortho</text>
      <text x="200" y="642">(1) Cylinder</text>
    </g>
  </svg>
);

/* ---------- timeline drawing ---------- */
const Ticks = () => (
  <svg className="ticks" viewBox="0 0 1213 29" preserveAspectRatio="none" aria-hidden="true">
    <path d="M0 0h1213v29H0z" fill="#444" />
    <path d="M208 0h887v29H208z" fill="#727272" />
    <path d={range(34).map((i) => `M${Math.round(207.7 + (i - 4.5) * 35.5) + 0.5} 0v29`).join("")} stroke="#000" strokeOpacity=".1" />
    <path d={range(34).map((i) => `M${Math.round(207.7 + (i - 5) * 35.5) + 0.5} 0v29`).join("")} stroke="#000" strokeOpacity=".25" />
    <path d="M207.500 0h3v29h-3z" fill="#5fce3a" />
  </svg>
);

const frames = range(34).map((i) => (i - 5) * 10);

export default function App() {
  return (
    <>
      <Global />
      <Screen>
        <Bar $line>
          <CornerSpot $bottom><Corner /></CornerSpot>
          <EditorType icon={<Info />} name="Info editor" />
          <Menu><MenuItem>File</MenuItem><MenuItem>Render</MenuItem><MenuItem>Window</MenuItem><MenuItem>Help</MenuItem></Menu>
          <Cluster $ml={0}>
            <IconButton $tone="dark" $w={26} aria-label="Screen layout"><LayoutIcon /><UpDown /></IconButton>
            <TextInput $w={106} defaultValue="Default" aria-label="Layout name" />
            <IconButton aria-label="Add layout"><Plus /></IconButton>
            <IconButton aria-label="Delete layout"><Cross /></IconButton>
          </Cluster>
          <Cluster>
            <IconButton $tone="dark" $w={26} aria-label="Scene"><SceneIcon /><UpDown /></IconButton>
            <TextInput $w={106} defaultValue="Scene" aria-label="Scene name" />
            <IconButton aria-label="Add scene"><Plus /></IconButton>
            <IconButton aria-label="Delete scene"><Cross /></IconButton>
          </Cluster>
          <Cluster $ml={13}><Choice value="Blender Render" w={96} name="Render engine" /></Cluster>
          <Stats><Logo /><span>v2.77 | Verts:8/7,136 | Edges:12/14,010 | Faces:6/6,888 | Tris:14,052 | Mem:24.20M | Cylinder</span></Stats>
          <CornerSpot $right><Corner flip /></CornerSpot>
        </Bar>
        <Workspace>
          <MainColumn>
            <ViewRow>
              <Shelf>
                <ShelfTop>
                  <Tabs>
                    <Tab $h={31} $on>Tools</Tab>
                    <Tab $h={38}>Create</Tab>
                    <Tab $h={70}>Shading / UVs</Tab>
                    <Tab $h={43}>Options</Tab>
                    <Tab $h={70}>Grease Pencil</Tab>
                    <Tab $h={50}>Relations</Tab>
                  </Tabs>
                  <ShelfBody>
                    <Panel title="Transform">
                      <Body><Stack $h={88}><Tools items={["Translate", "Rotate", "Scale", "Shrink/Fatten", "Push/Pull"]} /></Stack></Body>
                    </Panel>
                    <Panel title="Mesh Tools">
                      <Body>
                        <Caption $bottom={1}>Deform:</Caption>
                        <Stack $h={70}>
                          <Split><ToolButton>Slide Ed</ToolButton><ToolButton>Vertex</ToolButton></Split>
                          <Tools items={["Noise", "Smooth Vertex", "Randomize"]} />
                        </Stack>
                        <Caption $top={6} $bottom={1}>Add:</Caption>
                        <Stack $h={194}>
                          <Choice value="Extrude" name="Extrude" />
                          <Tools items={["Extrude Region", "Extrude Individual", "Inset Faces", "Make Edge/Face", "Subdivide", "Loop Cut and Slide", "Offset Edge Slide", "Duplicate"]} />
                          <Split><ToolButton>Spin</ToolButton><ToolButton>Screw</ToolButton></Split>
                          <Split><ToolButton aria-label="Knife" /><ToolButton aria-label="Select" /></Split>
                        </Stack>
                      </Body>
                    </Panel>
                  </ShelfBody>
                  <Track><Thumb $part={71} /></Track>
                  <ShelfEdge />
                </ShelfTop>
                <ShelfBottom>
                  <ShelfBody>
                    <PanelHead><Tri /><Title>Translate</Title><Grip /></PanelHead>
                    <Body $top={6}>
                      <Caption $bottom={1}>Vector</Caption>
                      <Stack $h={53} $round>
                        <Num label="X:" value="0.000" /><Num label="Y:" value="0.000" /><Num label="Z:" value="1.500" />
                      </Stack>
                      <Caption $top={6} $bottom={1}>Constraint Axis</Caption>
                      <CheckRow><Check />X</CheckRow>
                      <CheckRow><Check />Y</CheckRow>
                      <CheckRow $on><Check on />Z</CheckRow>
                      <Caption $top={6}>Orientation</Caption>
                    </Body>
                  </ShelfBody>
                  <Track><Thumb $part={47} /></Track>
                  <ShelfEdge />
                </ShelfBottom>
              </Shelf>
              <View3D><Wireframe /></View3D>
              <Props>
                <PropsBody>
                  <Panel title="Transform" pad={4}>
                    <Body>
                      <Caption $bottom={1}>Median:</Caption>
                      <Stack $h={53} $round><Num label="X:" value="0.00000" /><Num label="Y:" value="0.00000" /><Num label="Z:" value="1.50000" /></Stack>
                      <Stack $h={18} $top={2}><Split><ToolButton $center>Global</ToolButton><ToolButton $center $tone="dim">Local</ToolButton></Split></Stack>
                      <Caption>Vertices Data:</Caption>
                      <Stack $h={18} $round><Num label="Mean Bevel Weig:" value="0.00" /></Stack>
                      <Caption>Edges Data:</Caption>
                      <Stack $h={18} $round><Num label="Mean Bevel Weig:" value="0.00" /></Stack>
                      <Stack $h={18} $top={2} $round><Num label="Mean Crease:" value="0.00" /></Stack>
                    </Body>
                  </Panel>
                  <Panel title="Grease Pencil" check>
                    <Body>
                      <Stack $h={18}><Split><ToolButton $center $tone="blue">Scene</ToolButton><ToolButton $center $tone="dark">Object</ToolButton></Split></Stack>
                      <PencilRow>
                        <IconButton $tone="dark" $w={26} aria-label="Grease pencil data"><Pencil /><UpDown /></IconButton>
                        <NewButton><Plus /><span>New</span></NewButton>
                      </PencilRow>
                      <Stack $h={18} $top={4}><ToolButton $center>New Layer</ToolButton></Stack>
                    </Body>
                  </Panel>
                  <Panel title="View">
                    <Body>
                      <Stack $h={18} $round><Num label="Lens:" value="35.000" /></Stack>
                      <Caption>Lock to Object:</Caption>
                      <ObjectField><CubeO /><input aria-label="Lock to Object" /><Dropper /></ObjectField>
                      <CheckRow $top={2}><Check />Lock to Cursor</CheckRow>
                      <CheckRow $top={4}><Check />Lock Camera to View</CheckRow>
                      <Caption $top={6} $bottom={1}>Clip:</Caption>
                      <Stack $h={36} $round><Num label="Start:" value="0.100" /><Num label="End:" value="1000.000" /></Stack>
                      <Caption $off $top={2} $bottom={1}>Local Camera:</Caption>
                      <ObjectField $off><CubeO dim /><input defaultValue="Camera" aria-label="Local Camera" /><Cross off /></ObjectField>
                      <CheckRow $top={4}><Check />Render Border</CheckRow>
                    </Body>
                  </Panel>
                  <Panel title="3D Cursor">
                    <Body>
                      <Caption $bottom={1}>Location:</Caption>
                      <Stack $h={36} $round><Num label="X:" value="0.00000" /><span /></Stack>
                    </Body>
                  </Panel>
                </PropsBody>
                <Track><Thumb $part={50} /></Track>
                <ShelfEdge />
                <CornerSpot $right><Corner flip /></CornerSpot>
              </Props>
            </ViewRow>
            <Bar $h={23}>
              <CornerSpot $bottom><Corner /></CornerSpot>
              <EditorType icon={<CubeW />} name="3D view editor" />
              <Menu $gap={18}><MenuItem>View</MenuItem><MenuItem>Select</MenuItem><MenuItem>Add</MenuItem><MenuItem>Mesh</MenuItem></Menu>
              <Cluster $ml={0}><Choice icon={<EditIcon />} value="Edit Mode" w={83} name="Mode" /></Cluster>
              <Cluster><IconButton $tone="dark" $w={28} aria-label="Viewport shading"><Globe /><UpDown /></IconButton></Cluster>
              <Cluster><IconButton $tone="dark" $w={28} aria-label="Pivot point"><Pivot /><UpDown /></IconButton></Cluster>
              <Cluster>
                <IconButton $tone="dark" aria-label="Manipulator"><Axes /></IconButton>
                <IconButton $tone="blue" aria-label="Translate manipulator"><MoveIcon /></IconButton>
                <IconButton $tone="dark" $w={18} aria-label="Rotate manipulator"><RotIcon /></IconButton>
                <IconButton $tone="dark" aria-label="Scale manipulator"><ScaleIcon /></IconButton>
                <Choice value="Global" w={62} name="Orientation" />
              </Cluster>
              <Cluster>
                <IconButton aria-label="Vertex select"><ModeCube kind="v" /></IconButton>
                <IconButton aria-label="Edge select"><ModeCube kind="e" /></IconButton>
                <IconButton $tone="dim" aria-label="Face select"><ModeCube kind="f" /></IconButton>
              </Cluster>
              <Cluster $ml={4}><IconButton $tone="dark" $w={28} aria-label="Proportional editing"><PropEdit /><UpDown /></IconButton></Cluster>
              <Cluster $ml={4}>
                <IconButton aria-label="Snap"><Magnet /></IconButton>
                <IconButton $tone="dark" $w={31} aria-label="Snap element"><SnapInc /><UpDown /></IconButton>
                <IconButton aria-label="Snap to grid"><SnapGrid /></IconButton>
              </Cluster>
              <Cluster $ml={4}><IconButton $w={16} aria-label="Auto merge"><Merge /></IconButton></Cluster>
              <Cluster $ml={4}>
                <IconButton aria-label="Render image"><Camera star /></IconButton>
                <IconButton aria-label="Render animation"><Clap /></IconButton>
              </Cluster>
            </Bar>
            <TimeTrack><Ticks /><CornerSpot $right><Corner flip /></CornerSpot></TimeTrack>
            <TimeScale>{frames.map((f) => <span key={f}>{f}</span>)}</TimeScale>
            <Bar>
              <CornerSpot $bottom><Corner /></CornerSpot>
              <EditorType icon={<Clock />} name="Timeline editor" />
              <Menu $gap={18}><MenuItem>View</MenuItem><MenuItem>Marker</MenuItem><MenuItem>Frame</MenuItem><MenuItem>Playback</MenuItem></Menu>
              <Cluster $ml={0}>
                <IconButton aria-label="Use preview range"><ClockPie /></IconButton>
                <IconButton aria-label="Lock time"><Lock /></IconButton>
              </Cluster>
              <Pill $ml={4}><Num label="Start:" value="1" w={100} /><Num label="End:" value="250" w={97} /></Pill>
              <Pill><Num value="1" w={76} /></Pill>
              <Cluster $ml={13}>
                <IconButton aria-label="Jump to start"><Play d="M1.500 4v8M8 4v8L3 8zM14 4v8L8.500 8z" /></IconButton>
                <IconButton aria-label="Previous keyframe"><Play d="M8 4v8L2 8zM14.500 4v8l-6-4z" /></IconButton>
                <IconButton aria-label="Play reverse"><Play d="M12.500 1.500v13L3 8z" /></IconButton>
                <IconButton aria-label="Play"><Play d="M3.500 1.500v13L13 8z" /></IconButton>
                <IconButton aria-label="Next keyframe"><Play d="M8 4v8l6-4zM1.500 4v8l6-4z" /></IconButton>
                <IconButton aria-label="Jump to end"><Play d="M14.500 4v8M8 4v8l5-4zM2 4v8l5.500-4z" /></IconButton>
              </Cluster>
              <Cluster><Choice value="No Sync" w={98} name="Sync mode" /></Cluster>
              <Cluster $ml={14}><IconButton $w={16} aria-label="Record"><Rec /></IconButton></Cluster>
              <Cluster>
                <KeyField><KeySet /><input aria-label="Keying set" /></KeyField>
                <IconButton aria-label="Insert keyframe"><Key /></IconButton>
                <IconButton aria-label="Delete keyframe"><KeyOff /></IconButton>
              </Cluster>
            </Bar>
          </MainColumn>
          <SideColumn>
            <Bar>
              <EditorType icon={<TreeIcon />} name="Outliner editor" />
              <Menu><MenuItem>View</MenuItem><MenuItem>Search</MenuItem></Menu>
              <Cluster $ml={0}><Choice value="All Scenes" w={90} name="Display mode" /></Cluster>
              <CornerSpot $right><Corner flip /></CornerSpot>
            </Bar>
            <Outliner>
              <OutTop>
                <Tree>
                  <Node $depth={6} $picked><div><SceneIcon lit />Scene</div><div /><div /><div /></Node>
                  <Node $depth={13}><div><Expand /><Layers /><span>RenderLayers</span><Mark /></div><div /><div /><div /></Node>
                  <Node $depth={23}><div><World />World</div><div /><div /><div /></Node>
                  <Node $depth={9}><div><Expand /><Gap /><CamObj /><span>Camera</span><Mark /><Halo><CamObj tone="#aaa" line="#6a6a6a" /></Halo></div><div><Eye /></div><div><Cursor /></div><div><Camera s={14} /></div></Node>
                  <Node $depth={9} $on><div><Expand /><Gap /><MeshObj /><span>Cylinder</span><Mark /><Halo><MeshTri tone="#c6c6c6" /></Halo></div><div><Eye /></div><div><Cursor /></div><div><Camera s={14} /></div></Node>
                </Tree>
                <Track $bottom={4}><Thumb $part={77} /></Track>
              </OutTop>
              <HTrack><HThumb /></HTrack>
            </Outliner>
            <Bar>
              <EditorType icon={<PropsIcon />} name="Properties editor" />
              <Cluster>
                <IconButton $tone="dim" $w={18} aria-label="Render"><Camera dim /></IconButton>
                <IconButton $tone="dim" aria-label="Render layers"><Layers dim /></IconButton>
                <IconButton $tone="dim" $w={18} aria-label="Scene"><SceneIcon dim /></IconButton>
                <IconButton $tone="dim" aria-label="World"><World dim /></IconButton>
                <IconButton $tone="dim" $w={18} aria-label="Object"><CubeO dim /></IconButton>
                <IconButton $tone="dim" aria-label="Constraints"><Link /></IconButton>
                <IconButton $tone="blue" $w={18} aria-label="Modifiers"><Wrench /></IconButton>
                <IconButton $tone="dim" aria-label="Data"><MeshTri /></IconButton>
                <IconButton $tone="dim" $w={18} aria-label="Material" />
              </Cluster>
              <CornerSpot $right><Corner flip /></CornerSpot>
            </Bar>
            <Context>
              <Pin /><SceneIcon /><ArrowR /><Gap /><CubeO /><span>Cylinder</span>
            </Context>
            <ModifierRow><Choice value="Add Modifier" name="Add Modifier" /></ModifierRow>
          </SideColumn>
        </Workspace>
      </Screen>
    </>
  );
}
